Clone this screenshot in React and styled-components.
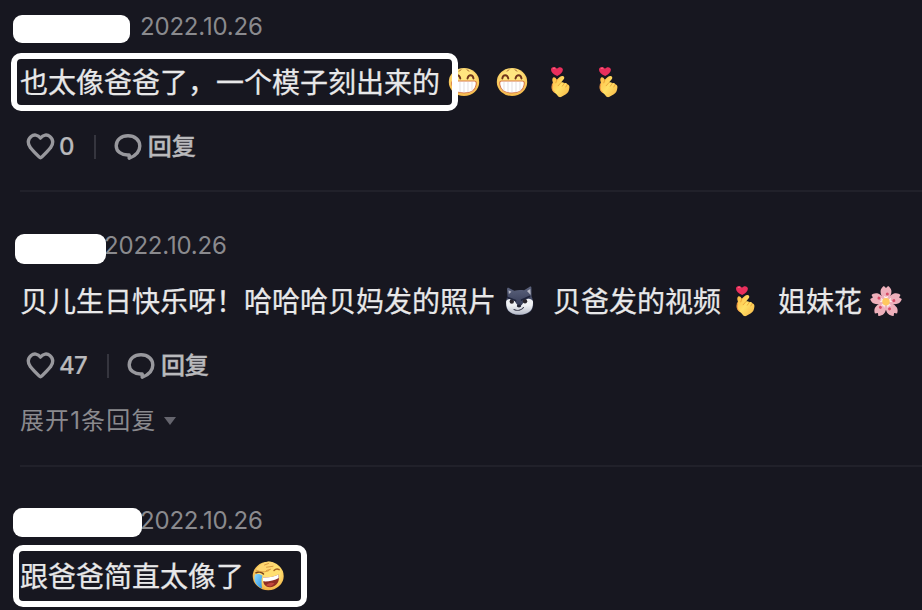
import styled, { createGlobalStyle } from 'styled-components';

const GlobalStyle = createGlobalStyle`
  body {
    margin: 0;
    background: #171720;
    overflow: hidden;
  }
`;

// Styled components
const CommentList = styled.main`
  height: 610px;
  padding-left: 20px;
  box-sizing: border-box;
  overflow: hidden;
  background: #171720;
  font-family: Inter, 'Noto Sans CJK SC', sans-serif;
  white-space: nowrap;
`;

const Comment = styled.article`
  & + & {
    margin-top: 27px;
  }
`;

const CommentHeader = styled.header`
  display: flex;
  align-items: flex-start;
  height: 54px;
`;

const HiddenName = styled.span`
  position: relative;
  z-index: 1;
  flex: none;
  width: ${({ $width }) => $width}px;
  height: ${({ $height }) => $height}px;
  margin-top: ${({ $top }) => $top}px;
  margin-left: ${({ $left }) => $left}px;
  border-radius: 9px;
  background: #fff;
`;

const CommentDate = styled.time`
  margin-left: ${({ $gap }) => $gap}px;
  color: #8a8a8e;
  font-size: 24px;
  line-height: 54px;
  letter-spacing: -0.2px;
`;

const CommentBody = styled.div`
  position: relative;
  display: flex;
  align-items: center;
  height: 56px;
  color: #e8e8e9;
  font-family: 'Noto Sans CJK SC', sans-serif;
  font-size: 28px;
  line-height: 54px;
  -webkit-text-stroke: 0.25px #e8e8e9;
`;

const BodyText = styled.span`
  height: 56px;
  margin-left: ${({ $gap = 0 }) => $gap}px;
`;

const HighlightFrame = styled.span`
  position: absolute;
  left: ${({ $left }) => $left}px;
  top: ${({ $top }) => $top}px;
  width: ${({ $width }) => $width}px;
  height: ${({ $height }) => $height}px;
  box-sizing: border-box;
  border: 6px solid #fff;
  border-radius: 10px;
`;

const Emoji = styled.svg`
  flex: none;
  width: 32px;
  height: 32px;
  margin: 0 8px;
`;

const Actions = styled.div`
  display: flex;
  align-items: center;
  height: 30px;
  margin-top: 22px;
  padding-left: 5px;
  color: #b9b9bc;
  font-size: 24px;
  font-weight: 500;
  line-height: 30px;
`;

const ActionIcon = styled.svg`
  flex: none;
  width: 30px;
  height: 30px;
  fill: none;
  stroke: #98989d;
  stroke-width: 3.4;
  stroke-linejoin: round;
`;

const LikeCount = styled.span`
  margin-left: 4px;
  letter-spacing: -0.8px;
  -webkit-text-stroke: 0.2px #b9b9bc;
`;

const Separator = styled.i`
  width: 2px;
  height: 24px;
  margin: 0 17px 0 20px;
  background: #35353e;
`;

const ReplyLabel = styled.span`
  margin-left: 5px;
  -webkit-text-stroke: 0.4px #b9b9bc;
`;

const ExpandReplies = styled.div`
  display: flex;
  align-items: center;
  height: 30px;
  margin-top: 25px;
  padding-bottom: 1px;
  color: #8a8a8e;
  font-size: 24px;
  line-height: 30px;
  letter-spacing: 1.1px;
`;

const Caret = styled.i`
  margin-left: 8px;
  border: 6px solid transparent;
  border-top: 8px solid #65656e;
  border-bottom: 0;
`;

const Divider = styled.hr`
  height: 2px;
  margin: 28px 0 0;
  border: 0;
  background: #21212a;
`;

// Emojis
const Grin = () => (
  <Emoji viewBox="0 0 32 32">
    <defs>
      <radialGradient id="grin" cx=".5" cy=".4" r=".62">
        <stop offset=".5" stopColor="#ffe680" />
        <stop offset="1" stopColor="#f3b342" />
      </radialGradient>
    </defs>
    <ellipse cx="16" cy="16" rx="15.2" ry="14" fill="url(#grin)" />
    <path d="M6.300 12.500c.7-4.300 5-4.300 6 0M19.500 12.500c1-4.300 5.300-4.300 6 0" fill="none" stroke="#71351b" strokeWidth="1.900" strokeLinecap="round" />
    <path d="M11 5.500l2-2M19 3.500l2 2" stroke="#9a5427" strokeWidth="1" />
    <path d="M5.500 15h21c2 0 2 2 1.600 4-1 5.500-4 8-12.100 8S4.900 24.500 3.900 19c-.4-2-.4-4 1.600-4z" fill="#fff" stroke="#d87845" strokeWidth="1.100" />
    <path d="M8 16v8.500M12 16v10.300M16 16v10.500M20 16v10.300M24 16v8.500" stroke="#d6d2d5" strokeWidth=".7" />
  </Emoji>
);

const FingerHeart = () => (
  <Emoji viewBox="0 0 32 32">
    <defs>
      <linearGradient id="hand" x1="0" x2="1" y1="0" y2="1">
        <stop offset="0" stopColor="#ffb943" />
        <stop offset=".5" stopColor="#ffe066" />
        <stop offset="1" stopColor="#f7b445" />
      </linearGradient>
    </defs>
    <path d="M13.200 10C9.500 8.500 7 6.200 7 3.700 7 .7 11.200.2 12.900 2.800 14.700.2 18.900.8 18.900 3.800c0 2.500-2.500 4.700-5.700 6.200z" fill="#e92f5c" />
    <path d="M8.800 3c.7-1 1.700-1 2.500-.3" fill="none" stroke="#ff7189" strokeWidth="1" />
    <path d="M8.900 16.500c-1-2.300-.8-4.800.7-5.300 1.500-.3 2.600 1.200 3.200 2.600 1.600-2.100 3.900-4.100 5.900-3.900 2 .3 2 2.200.8 3.500l-2.500 3.200c1.100-.5 2.600-.3 3.300.6 1.400-.4 2.600.2 3 1.200 1.600.1 2.400 1.500 2.100 3.300-.4 3.300-1.400 5.500-3.900 6.700L17 31c-1.400.5-2.700-.3-3.500-1.600-1.300-2-4.500-3-5.200-5.600-.6-2.500 0-4.800.6-7.300z" fill="url(#hand)" />
    <path d="M12.800 13.800l-1 3M17 16.600l-2.900 3.200M20.300 17.200l-2 3M23.300 18.400l-1.500 2.600" fill="none" stroke="#e5952f" strokeWidth=".75" strokeLinecap="round" />
    <path d="M8.500 18c-1 4-.7 6.500 2 8.200" fill="none" stroke="#f39a43" strokeWidth="1.100" strokeLinecap="round" />
  </Emoji>
);

const Husky = () => (
  <Emoji viewBox="0 0 32 32">
    <defs>
      <linearGradient id="fur" x1="0" x2="0" y1="0" y2="1">
        <stop offset="0" stopColor="#5c637d" />
        <stop offset=".6" stopColor="#3a405b" />
        <stop offset="1" stopColor="#3f455e" />
      </linearGradient>
      <linearGradient id="muzzle" x1="0" x2="0" y1="0" y2="1">
        <stop offset=".4" stopColor="#f0f1f4" />
        <stop offset="1" stopColor="#b4b9c7" />
      </linearGradient>
    </defs>
    <path d="M3.500 11.500L3 4.500c0-1.700 1-2 2.300-1.300l5 2.500c3-.9 6.800-1 9.800-.4L25.400 2c1.200-.8 2-.3 2 1l.2 8.500c1.500 3 1.700 6 1.600 9-.3 6-5.800 9.500-13.600 9.500S2.200 26.500 2 20.500c-.1-3.500.2-6.500 1.500-9z" fill="url(#fur)" />
    <path d="M4.500 5.300l.4 3.800 2.600-2.400zM26.300 4l.4 6-3.700-4z" fill="#b9bac6" />
    <path d="M2.200 16c1.300-2.200 4.600-2.700 7.200-1.200 1.700 1 2 3.200 4.200 5.400h4c2-2.200 2.400-4.700 4-5.600 2.400-1.400 5.700-.8 7.300 1.400.9 8.600-3.500 13.700-13.300 13.700S1.400 24.500 2.200 16z" fill="url(#muzzle)" />
    <circle cx="7.800" cy="16.500" r="2.200" fill="#29242a" />
    <circle cx="21" cy="16.200" r="2.200" fill="#29242a" />
    <path d="M3.500 12.500l8 3M25.500 11.500l-8 3.500" stroke="#20253c" strokeWidth="1.700" strokeLinecap="round" />
    <ellipse cx="15" cy="21" rx="2.200" ry="1.400" fill="#1f2130" />
    <path d="M10 24.500c3.500 1.600 7.500.7 9.500-2" fill="none" stroke="#393a4b" strokeWidth="1.100" strokeLinecap="round" />
  </Emoji>
);

const petals = [0, 72, 144, 216, 288];

const Blossom = () => (
  <Emoji viewBox="0 0 32 32">
    {petals.map((angle) => (
      <g key={angle} transform={`rotate(${angle} 16 16.800)`}>
        <path d="M16 17c-3-2.500-5.800-7.300-5.400-11.200C10.800 3.500 12.500 1.700 13.900.9L16 3 18.100.9c1.400.8 3.100 2.600 3.300 4.900.4 3.900-2.400 8.700-5.400 11.200z" fill="#eeb0bb" />
      </g>
    ))}
    {petals.map((angle) => (
      <g key={angle} transform={`rotate(${angle} 16 16.800)`}>
        <path d="M16 17l-2.200-6.300 2.200 1.400 2.200-1.400z" fill="#fff0ed" />
        <circle cx="17.300" cy="9" r="1.500" fill="#d84c67" />
      </g>
    ))}
    <circle cx="16" cy="16.800" r="3.700" fill="#ffc85e" />
  </Emoji>
);

const CryLaugh = () => (
  <Emoji viewBox="0 0 32 32">
    <defs>
      <radialGradient id="laugh" cx=".55" cy=".4" r=".6">
        <stop offset=".55" stopColor="#ffdf70" />
        <stop offset="1" stopColor="#f2b044" />
      </radialGradient>
      <linearGradient id="tear" x1="0" x2="1" y1="0" y2="1">
        <stop offset="0" stopColor="#8fdcff" />
        <stop offset="1" stopColor="#258fe4" />
      </linearGradient>
    </defs>
    <ellipse cx="16.200" cy="16" rx="15.500" ry="14.300" fill="url(#laugh)" />
    <path d="M11 17.500c5.500.4 11.500-.8 15.500-3 1.700 6.500-1.500 12-8 12.700-5.500.4-8-4-7.500-9.700z" fill="#8f2e23" />
    <path d="M11 17.500c5.500.4 11.500-.8 15.500-3l.2 3.500C22.500 20.500 16 21.800 11 21.300z" fill="#fff" />
    <path d="M14 25.300c2-2.500 5.500-3.300 8.500-2-2 3.300-5.500 4-8.500 2z" fill="#c2483c" />
    <path d="M3 14.500c2.500-1 5.500-.5 7.500 1.300-1.300 3.500-1 8.500-.5 12.800C5 26.500 1 21.500 3 14.500z" fill="url(#tear)" />
    <path d="M4 12.800c2.700-1.300 5.500-.9 7.500 1.200" fill="none" stroke="#794018" strokeWidth="1.500" strokeLinecap="round" />
    <path d="M22 10.500c1.500-1.500 3.500-1.800 5.200-.8" fill="none" stroke="#a5601f" strokeWidth="1.400" strokeLinecap="round" />
    <path d="M3 9.500C7 8 9.500 2.300 15.500 1.700c3.500-.4 6.500.5 7 2.500.2 1-.3 1.700-1.200 2.100.9 2-.9 3.400-3.300 3.500-3.500 2.700-9.500 2.700-15-.3z" fill="#ffd771" />
    <path d="M12.500 5l4-1.500M14.500 7.200l6.500-.9M14.500 10.500l4-1.200M4 10c4.500 2.400 9.500 2.500 13 .5" fill="none" stroke="#d08c35" strokeWidth=".8" strokeLinecap="round" />
  </Emoji>
);

const ActionBar = ({ likes }) => (
  <Actions>
    <ActionIcon viewBox="0 0 30 30">
      <path d="M15.500 6.100C12.800 2.500 8.800 2.300 6.100 4.500 2.400 7.500 2.500 12.200 5.500 15.800c2.500 3.200 5.700 6.300 8.600 9.100.8.800 2 .8 2.800 0 2.900-2.800 6.100-5.900 8.600-9.100 3-3.600 3.100-8.300-.6-11.300-2.700-2.200-6.700-2-9.400 1.600z" />
    </ActionIcon>
    <LikeCount>{likes}</LikeCount>
    <Separator />
    <ActionIcon viewBox="0 0 30 30">
      <path d="M16.200 26.200v-3.300C8.500 23.500 3.200 19.600 3.200 13.700 3.200 8 8.300 3.700 15 3.700s11.800 4.300 11.800 10.200c0 5-3.800 9.600-10.600 12.300z" />
    </ActionIcon>
    <ReplyLabel>回复</ReplyLabel>
  </Actions>
);

export default function App() {
  return (
    <>
      <GlobalStyle />
      <CommentList>
        <Comment>
          <CommentHeader>
            <HiddenName $left={-7} $top={15} $width={117} $height={28} />
            <CommentDate $gap={10}>2022.10.26</CommentDate>
          </CommentHeader>
          <CommentBody>
            <BodyText>也太像爸爸了，一个模子刻出来的</BodyText>
            <Grin />
            <Grin />
            <FingerHeart />
            <FingerHeart />
            <HighlightFrame $left={-9} $top={-1} $width={447} $height={58} />
          </CommentBody>
          <ActionBar likes={0} />
          <Divider />
        </Comment>

        <Comment>
          <CommentHeader>
            <HiddenName $left={-5} $top={15} $width={91} $height={30} />
            <CommentDate $gap={-2}>2022.10.26</CommentDate>
          </CommentHeader>
          <CommentBody>
            <BodyText>贝儿生日快乐呀！哈哈哈贝妈发的照片</BodyText>
            <Husky />
            <BodyText $gap={9}>贝爸发的视频</BodyText>
            <FingerHeart />
            <BodyText $gap={9}>姐妹花</BodyText>
            <Blossom />
          </CommentBody>
          <ActionBar likes={47} />
          <ExpandReplies>
            展开1条回复
            <Caret />
          </ExpandReplies>
          <Divider />
        </Comment>

        <Comment>
          <CommentHeader>
            <HiddenName $left={-7} $top={14} $width={129} $height={29} />
            <CommentDate $gap={-2}>2022.10.26</CommentDate>
          </CommentHeader>
          <CommentBody>
            <BodyText>跟爸爸简直太像了</BodyText>
            <CryLaugh />
            <HighlightFrame $left={-7} $top={-3} $width={294} $height={62} />
          </CommentBody>
        </Comment>
      </CommentList>
    </>
  );
}
